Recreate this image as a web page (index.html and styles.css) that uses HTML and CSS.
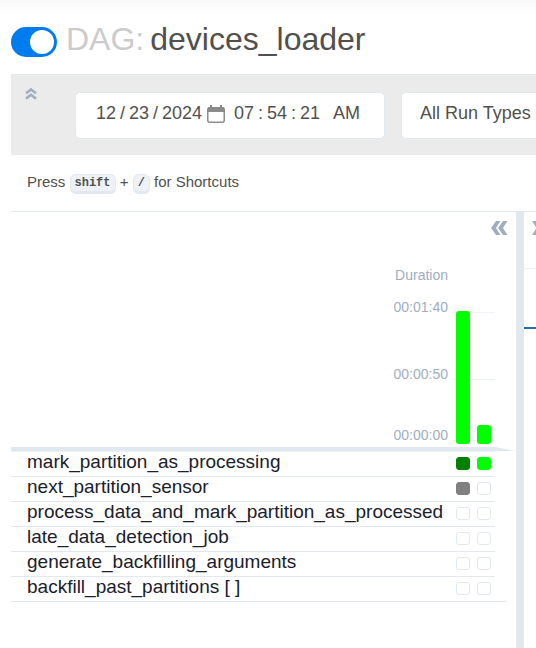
FILE: index.html
```html
<!DOCTYPE html>
<html lang="en">
<head>
<meta charset="utf-8">
<title>devices_loader</title>
<link rel="stylesheet" href="styles.css">
</head>
<body>
<header class="title-bar">
  <input class="switch" type="checkbox" aria-label="DAG enabled" checked>
  <h1 class="title"><span class="title-prefix">DAG:</span> <span>devices_loader</span></h1>
</header>
<main class="main">
  <section class="filters">
    <button class="icon-button collapse" aria-label="Collapse filters">
      <svg width="12" height="12" viewBox="0 0 12 12"><path d="M1 5.300 6 1.500l5 3.800M1 10.600 6 6.800l5 3.800" fill="none" stroke="currentColor" stroke-width="2.600"/></svg>
    </button>
    <div class="datetime">
      <input class="two" aria-label="Month" value="12"><span>/</span>
      <input class="two" aria-label="Day" value="23"><span>/</span>
      <input class="four" aria-label="Year" value="2024">
      <button class="icon-button calendar" aria-label="Open calendar">
        <svg width="18" height="18" viewBox="0 0 18 18"><path d="M4 0v3M14 0v3" stroke="currentColor" stroke-width="2"/><rect x=".75" y="2.750" width="16.500" height="14.500" rx="2" fill="none" stroke="currentColor" stroke-width="1.500"/><path d="M1 2.500h16V7H1z" fill="currentColor"/></svg>
      </button>
      <span class="time">
        <input class="two" aria-label="Hours" value="07"><span>:</span>
        <input class="two" aria-label="Minutes" value="54"><span>:</span>
        <input class="two" aria-label="Seconds" value="21">
      </span>
      <input class="meridiem" aria-label="AM or PM" value="AM">
    </div>
    <select class="run-types" aria-label="Run types"><option>All Run Types</option></select>
  </section>
  <p class="shortcuts">Press <kbd>shift</kbd> + <kbd>/</kbd> for Shortcuts</p>
  <div class="panels">
    <section class="grid-panel">
      <button class="icon-button hide-panel" aria-label="Hide details">
        <svg width="17" height="14" viewBox="0 0 17 14"><path d="M0 7 5 0h4.500L5 7l4.500 7H5zM7 7l5-7h4.500L12 7l4.500 7H12z" fill="currentColor"/></svg>
      </button>
      <div class="chart">
        <div class="chart-title">Duration</div>
        <div class="tick">00:01:40</div>
        <div class="tick">00:00:50</div>
        <div class="tick tick-last">00:00:00</div>
        <div class="bars"><span class="bar" style="height:133px"></span><span class="bar" style="height:19px"></span></div>
      </div>
      <div class="band"></div>
      <table class="tasks">
        <tbody>
          <tr><th scope="row">mark_partition_as_processing</th><td><div class="runs"><i class="run success"></i><i class="run running"></i></div></td></tr>
          <tr><th scope="row">next_partition_sensor</th><td><div class="runs"><i class="run queued"></i><i class="run"></i></div></td></tr>
          <tr><th scope="row">process_data_and_mark_partition_as_processed</th><td><div class="runs"><i class="run"></i><i class="run"></i></div></td></tr>
          <tr><th scope="row">late_data_detection_job</th><td><div class="runs"><i class="run"></i><i class="run"></i></div></td></tr>
          <tr><th scope="row">generate_backfilling_arguments</th><td><div class="runs"><i class="run"></i><i class="run"></i></div></td></tr>
          <tr><th scope="row">backfill_past_partitions [ ]</th><td><div class="runs"><i class="run"></i><i class="run"></i></div></td></tr>
        </tbody>
      </table>
      <div class="tasks-end"></div>
    </section>
    <div class="divider"></div>
    <section class="details">
      <div class="details-head">
        <button class="icon-button" aria-label="Show details">
          <svg width="17" height="14" viewBox="0 0 17 14"><path d="M9.500 7 4.500 0H0l4.500 7L0 14h4.500zM16.500 7l-5-7H7l4.500 7L7 14h4.500z" fill="currentColor"/></svg>
        </button>
      </div>
      <div class="details-tabs"></div>
    </section>
  </div>
</main>
</body>
</html>
```
FILE: styles.css
```css
* {
  box-sizing: border-box;
}

body {
  margin: 0;
  min-height: 100vh;
  display: flex;
  flex-direction: column;
  overflow: hidden;
  background: linear-gradient(#f8f8f8, #fff 14px);
  color: #51504f;
  font-family: "Liberation Sans", Arial, sans-serif;
  font-size: 18px;
}

input,
select,
button {
  margin: 0;
  padding: 0;
  border: 0;
  background: none;
  color: inherit;
  font: inherit;
}

.icon-button {
  display: flex;
  color: #a0aec0;
}

.title-bar {
  display: flex;
  align-items: center;
  gap: 9px;
  height: 74px;
  padding: 10px 11px 0;
}

.switch {
  appearance: none;
  flex: none;
  width: 46px;
  height: 30px;
  padding: 3px;
  border-radius: 15px;
  background: #017cee;
}

.switch::before {
  content: "";
  display: block;
  width: 24px;
  height: 24px;
  border-radius: 50%;
  background: #fff;
}

.switch:checked::before {
  margin-left: auto;
}

.title {
  display: flex;
  gap: 6px;
  margin: 0 0 6px;
  font-size: 32px;
  font-weight: 400;
  line-height: 36px;
  white-space: nowrap;
}

.title-prefix {
  color: #cbcbcb;
}

.main {
  flex: 1;
  display: flex;
  flex-direction: column;
  margin-left: 11px;
}

.filters {
  display: flex;
  align-items: flex-start;
  height: 81px;
  padding: 17px 0 0 14px;
  border-top: 1px solid #e2e8f0;
  background: #ebebeb;
}

.collapse {
  flex: none;
  margin-right: 38px;
  margin-top: -4px;
}

.datetime,
.run-types {
  height: 47px;
  border: 1px solid #e2e8f0;
  border-radius: 5px;
  background: #fff;
}

.datetime {
  flex: none;
  display: flex;
  align-items: center;
  gap: 4px;
  width: 310px;
  margin-right: 16px;
  padding: 0 20px 4px;
}

.two {
  width: 20px;
}

.four {
  width: 41px;
}

.calendar {
  color: #8b8b8b;
}

.time {
  display: flex;
  gap: 4px;
  margin-left: 5px;
}

.time span {
  width: 5px;
}

.meridiem {
  width: 30px;
  margin-left: 9px;
}

.run-types {
  appearance: none;
  flex: 1;
  min-width: 0;
  padding: 0 0 6px 18px;
  border-right: 0;
  border-radius: 5px 0 0 5px;
}

.shortcuts {
  height: 57px;
  margin: 0;
  padding-left: 16px;
  border-bottom: 1px solid #e2e8f0;
  font-size: 15px;
  line-height: 54px;
}

kbd {
  padding: 1px 4px;
  border: 1px solid #e2e8f0;
  border-bottom-width: 3px;
  border-radius: 6px;
  background: #edf2f7;
  font: bold 12px "Liberation Mono", monospace;
  vertical-align: 1px;
}

.panels {
  flex: 1;
  display: flex;
}

.grid-panel {
  flex: none;
  width: 505px;
}

.hide-panel {
  margin: 9px 8px 0 auto;
}

.chart {
  position: relative;
  height: 212px;
  margin-right: 21px;
  padding-top: 32px;
  color: #a0aec0;
  font-size: 14px;
  line-height: 16px;
}

.chart-title,
.tick {
  padding-right: 47px;
  text-align: right;
}

.chart-title {
  margin-bottom: 16px;
}

.tick {
  height: 67px;
  background: linear-gradient(#edf2f7, #edf2f7) right 13px / 43px 1px no-repeat;
}

.tick:nth-child(3) {
  height: 61px;
}

.tick-last {
  height: 16px;
}

.bars {
  position: absolute;
  right: 4px;
  bottom: 3px;
  display: flex;
  align-items: flex-end;
  gap: 7px;
}

.bar {
  width: 14px;
  border-radius: 3px;
  background: #0f0;
}

.band {
  height: 4px;
  background: #e2e8f0;
  clip-path: polygon(0 0, 484px 0, 100% 100%, 0 100%);
}

.tasks {
  width: 484px;
  border-top: 1px solid #edf2f7;
  border-spacing: 0;
  color: #1a202c;
}

.tasks th,
.tasks td {
  height: 25px;
  padding: 0;
  border-bottom: 1px solid #e2e8f0;
  line-height: 20px;
  vertical-align: top;
}

.tasks th {
  padding-left: 16px;
  font-size: 19px;
  font-weight: 400;
  text-align: left;
  white-space: nowrap;
}

.runs {
  display: flex;
  justify-content: flex-end;
  gap: 7px;
  padding: 5px 4px 0 0;
}

.run {
  width: 14px;
  height: 13px;
  border: 1px solid #e2e8f0;
  border-radius: 3px;
}

.success {
  border-color: #008000;
  background: #008000;
}

.running {
  border-color: #0f0;
  background: #0f0;
}

.queued {
  border-color: #808080;
  background: #808080;
}

.tasks-end {
  width: 495px;
  height: 1px;
  margin-top: -1px;
  background: #e2e8f0;
}

.divider {
  flex: none;
  width: 8px;
  background: #e2e8f0;
}

.details {
  flex: 1;
  min-width: 0;
  overflow: hidden;
}

.details-head {
  height: 57px;
  padding: 9px 0 0 8px;
  border-bottom: 1px solid #edf2f7;
}

.details-tabs {
  height: 60px;
  border-bottom: 2px solid #2b6cb0;
}
```
